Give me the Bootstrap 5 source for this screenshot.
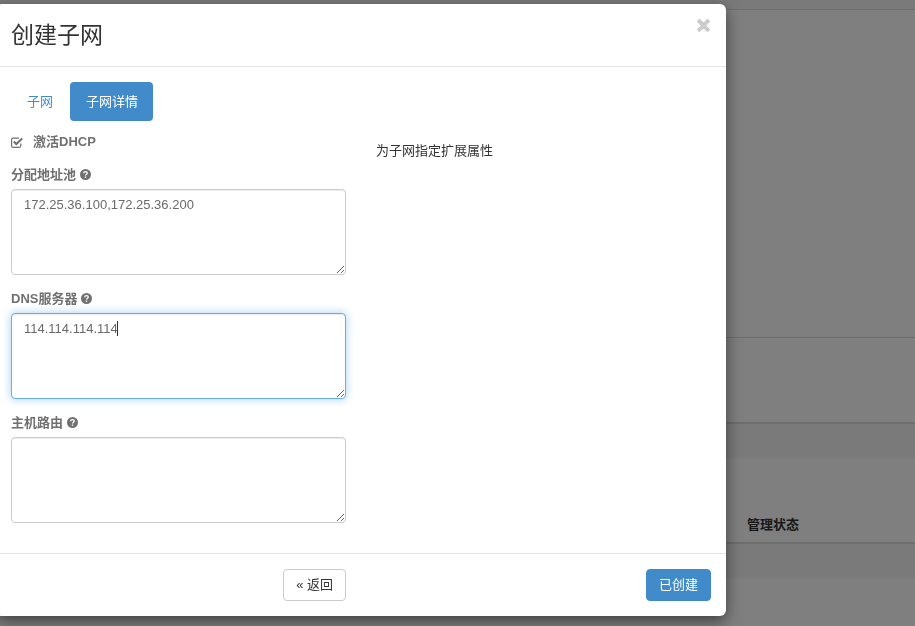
<!DOCTYPE html>
<html lang="zh-CN">
<head>
<meta charset="utf-8">
<title>创建子网</title>
<link href="https://cdn.jsdelivr.net/npm/bootstrap@5.3.0/dist/css/bootstrap.min.css" rel="stylesheet">
<style>
html, body { height: 100%; overflow: hidden; }
body { font-family: "Liberation Sans", "Noto Sans CJK SC", sans-serif; font-size: 13px; line-height: 1.42857; color: #333; background: #fff; }
.pg-band { background: #f5f5f5; }
.pg-top { height: 9px; }
.pg-line { height: 1px; background: #ddd; }
.pg-line2 { height: 2px; background: #ddd; }
.pg-gap1 { height: 327px; }
.pg-gap2 { height: 84px; }
.pg-h34 { height: 34px; }
.pg-head { height: 84px; padding-left: 747px; padding-top: 58px; font-weight: 700; }
.dlg { position: absolute; left: -4px; top: 4px; width: 730px; height: 612px; z-index: 1060; background: #fff; border: 0; border-radius: 6px; box-shadow: 0 5px 15px rgba(0,0,0,.5); }
.dlg-head { height: 63px; padding: 0 15px; border-bottom: 1px solid #e5e5e5; }
.dlg-title { font-size: 23px; line-height: 62px; font-weight: 400; margin: 0; color: #333; }
.dlg-close { position: absolute; right: 14px; top: 14px; width: 17px; height: 18px; opacity: .2; }
.dlg-body { height: 486px; padding: 15px 15px 0; }
.tabs .nav-link { font-size: 13px; line-height: 19px; padding: 10px 15px 10px 16px; border-radius: 4px; color: #428bca; height: 39px; }
.tabs .nav-link.active { background: #428bca; color: #fff; }
.tabs .nav-item + .nav-item { margin-left: 2px; }
.cols { --bs-gutter-x: 30px; margin-top: 0; }
.chk { height: 19px; margin-top: 12px; font-weight: 700; color: #707070; display: flex; align-items: center; }
.chk svg { margin-right: 10px; }
.fld { margin-top: 13px; }
.fld + .fld { margin-top: 14px; }
.fld-label { display: block; font-weight: 700; color: #707070; line-height: 19px; margin-bottom: 5px; }
.fld-label svg { vertical-align: -1px; margin-left: 0; }
.area { display: block; height: 86px; font-size: 13px; line-height: 19px; color: #6a6a6a; padding: 5px 12px 6px; border: 1px solid #ccc; border-radius: 4px; box-shadow: inset 0 1px 1px rgba(0,0,0,.075); font-family: inherit; }
.area.lit, .area.lit:focus { border-color: #66afe9; box-shadow: inset 0 1px 1px rgba(0,0,0,.075), 0 0 8px rgba(102,175,233,.6); }
.area-wrap { position: relative; }
.caret-bar { position: absolute; left: 106px; top: 8px; width: 1px; height: 15px; background: #333; }
.side-note { margin-top: 20px; line-height: 19px; color: #333; }
.dlg-foot { height: 63px; border-top: 1px solid #e5e5e5; padding: 15px 15px 0; }
.act { font-size: 13px; line-height: 19px; padding: 5px 12px 6px; border-radius: 4px; height: 32px; }
.act-back { background: #fff; border: 1px solid #ccc; color: #333; }
.act-go { background: #428bca; border: 1px solid #428bca; color: #fff; }
</style>
</head>
<body>
<div class="page-under">
  <div class="pg-top pg-band"></div>
  <div class="pg-line"></div>
  <div class="pg-gap1"></div>
  <div class="pg-line"></div>
  <div class="pg-gap2"></div>
  <div class="pg-line2"></div>
  <div class="pg-h34 pg-band"></div>
  <div class="pg-head">管理状态</div>
  <div class="pg-line2"></div>
  <div class="pg-h34 pg-band"></div>
</div>
<div class="modal-backdrop show"></div>
<div class="modal-content dlg">
  <div class="dlg-head">
    <h3 class="dlg-title">创建子网</h3>
    <svg class="dlg-close" viewBox="0 0 16 18" aria-label="关闭"><path d="M2.200 3.400 4 1.600 8 5.600l4-4 1.800 1.800-4 4 4 4-1.800 1.800-4-4-4 4-1.800-1.800 4-4z" fill="#000" stroke="#000" stroke-width="1.400" stroke-linejoin="round"/></svg>
  </div>
  <div class="dlg-body">
    <ul class="nav nav-pills tabs">
      <li class="nav-item"><a class="nav-link" href="#">子网</a></li>
      <li class="nav-item"><a class="nav-link active" href="#">子网详情</a></li>
    </ul>
    <div class="row cols">
      <div class="col-6">
        <div class="chk">
          <svg width="12" height="11" viewBox="0 0 12 11"><path d="M9.800 6.500v2A1.800 1.800 0 0 1 8 10.300H2A1.500 1.500 0 0 1 .6 8.800V2.700A1.500 1.500 0 0 1 2 1.200H8" fill="none" stroke="#707070" stroke-width="1.200"/><path d="M2.800 4.500 5.300 7 11.200 1.500" fill="none" stroke="#707070" stroke-width="2"/></svg>
          <span>激活DHCP</span>
        </div>
        <div class="fld">
          <label class="fld-label">分配地址池 <svg width="11" height="11" viewBox="0 0 11 11"><circle cx="5.500" cy="5.500" r="5.500" fill="#707070"/><path d="M3.700 4.300C3.700 3.200 4.500 2.600 5.500 2.600S7.300 3.200 7.300 4.100C7.300 5.300 5.500 5.300 5.500 6.600" fill="none" stroke="#fff" stroke-width="1.300"/><rect x="4.800" y="7.500" width="1.400" height="1.300" fill="#fff"/></svg></label>
          <textarea class="form-control area">172.25.36.100,172.25.36.200</textarea>
        </div>
        <div class="fld">
          <label class="fld-label">DNS服务器 <svg width="11" height="11" viewBox="0 0 11 11"><circle cx="5.500" cy="5.500" r="5.500" fill="#707070"/><path d="M3.700 4.300C3.700 3.200 4.500 2.600 5.500 2.600S7.300 3.200 7.300 4.100C7.300 5.300 5.500 5.300 5.500 6.600" fill="none" stroke="#fff" stroke-width="1.300"/><rect x="4.800" y="7.500" width="1.400" height="1.300" fill="#fff"/></svg></label>
          <div class="area-wrap">
            <textarea class="form-control area lit">114.114.114.114</textarea>
            <span class="caret-bar"></span>
          </div>
        </div>
        <div class="fld">
          <label class="fld-label">主机路由 <svg width="11" height="11" viewBox="0 0 11 11"><circle cx="5.500" cy="5.500" r="5.500" fill="#707070"/><path d="M3.700 4.300C3.700 3.200 4.500 2.600 5.500 2.600S7.300 3.200 7.300 4.100C7.300 5.300 5.500 5.300 5.500 6.600" fill="none" stroke="#fff" stroke-width="1.300"/><rect x="4.800" y="7.500" width="1.400" height="1.300" fill="#fff"/></svg></label>
          <textarea class="form-control area"></textarea>
        </div>
      </div>
      <div class="col-6">
        <p class="side-note">为子网指定扩展属性</p>
      </div>
    </div>
  </div>
  <div class="dlg-foot">
    <div class="row cols">
      <div class="col-6 text-end"><button type="button" class="btn act act-back">« 返回</button></div>
      <div class="col-6 text-end"><button type="button" class="btn act act-go">已创建</button></div>
    </div>
  </div>
</div>
<script src="https://cdn.jsdelivr.net/npm/bootstrap@5.3.0/dist/js/bootstrap.bundle.min.js"></script>
</body>
</html>
